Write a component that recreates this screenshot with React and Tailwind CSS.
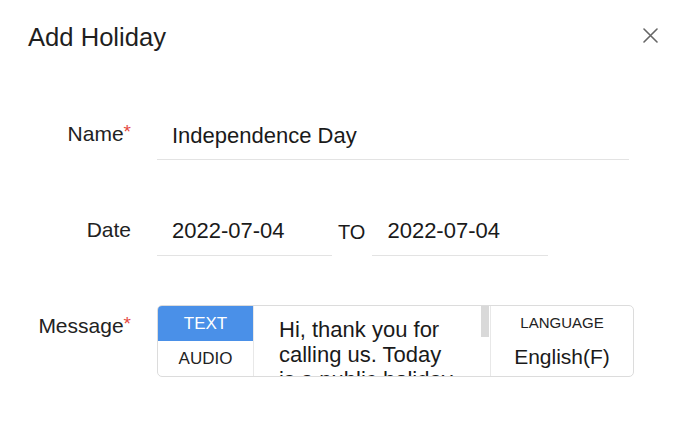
import React from "react";

const font = { fontFamily: '"Liberation Sans", Arial, sans-serif' };

function Label({ children, required, className = "" }) {
  return (
    <div className={`w-[131px] shrink-0 text-right text-[21px] leading-[30px] text-[#222] ${className}`}>
      {children}
      {required && <span className="text-[19px] text-[#e5483f] align-top relative top-[-2px]">*</span>}
    </div>
  );
}

export default function App() {
  return (
    <div className="w-[682px] h-[422px] bg-white overflow-hidden" style={font}>
      {/* header */}
      <div className="flex items-start justify-between pl-[28px] pr-[24px] pt-[22px]">
        <h2 className="text-[25.6px] leading-[30px] text-[#1f1f1f]">Add Holiday</h2>
        <button className="mt-[6px] text-[#666]" title="Close">
          <svg width="15" height="15" viewBox="0 0 15 15" fill="none" stroke="currentColor" strokeWidth="1.6" strokeLinecap="round">
            <path d="M1 1L14 14M14 1L1 14" />
          </svg>
        </button>
      </div>

      {/* name */}
      <div className="flex mt-[67px]">
        <Label required>Name</Label>
        <div className="ml-[26px] mt-[2px] w-[472px] border-b border-[#e3e3e3] pl-[15px] pb-[8px] text-[22px] leading-[30px] text-[#1a1a1a]">
          Independence Day
        </div>
      </div>

      {/* date */}
      <div className="flex mt-[55px]">
        <Label>Date</Label>
        <div className="ml-[26px] mt-[1px] w-[175px] border-b border-[#e3e3e3] pl-[15px] pb-[9px] text-[22px] leading-[30px] text-[#1a1a1a]">
          2022-07-04
        </div>
        <div className="ml-[6px] mt-[2px] text-[20px] leading-[30px] text-[#1a1a1a]">TO</div>
        <div className="ml-[7px] mt-[1px] w-[176px] border-b border-[#e3e3e3] pl-[15px] pb-[9px] text-[22px] leading-[30px] text-[#1a1a1a]">
          2022-07-04
        </div>
      </div>

      {/* message */}
      <div className="flex mt-[49px]">
        <Label required className="mt-[6px]">Message</Label>
        <div className="ml-[26px] w-[477px] h-[72px] border border-[#dcdcdc] rounded-[5px] overflow-hidden flex">
          <div className="w-[96px] shrink-0 border-r border-[#e8e8e8] flex flex-col">
            <div className="h-[35px] bg-[#4a90e8] text-white text-[17px] flex items-center justify-center">TEXT</div>
            <div className="h-[35px] text-[#222] text-[17px] flex items-center justify-center">AUDIO</div>
          </div>
          <div className="relative w-[237px] shrink-0 border-r border-[#e8e8e8] overflow-hidden pl-[25px] pt-[11px]">
            <div className="w-[183px] text-[22px] leading-[25px] text-[#1a1a1a]">
              Hi, thank you for calling us. Today is a public holiday. We are closed.
            </div>
            <div className="absolute top-0 right-[1px] w-[8px] h-[31px] bg-[#d9d9d9]" />
          </div>
          <div className="flex-1 flex flex-col">
            <div className="h-[35px] flex items-center justify-center text-[15px] text-[#222]">LANGUAGE</div>
            <div className="h-[35px] flex items-center justify-center pb-[4px] text-[21px] text-[#1a1a1a]">English(F)</div>
          </div>
        </div>
      </div>
    </div>
  );
}
